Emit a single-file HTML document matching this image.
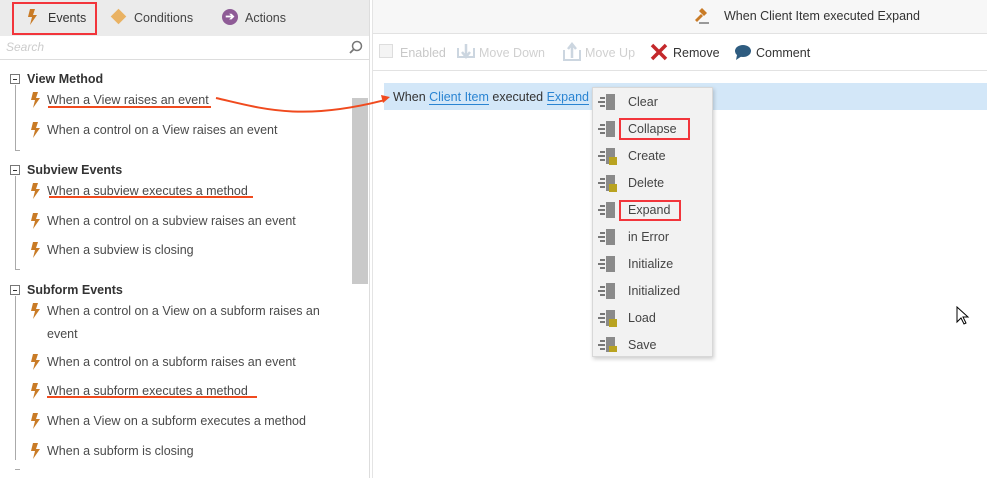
<!DOCTYPE html>
<html><head><style>
*{margin:0;padding:0;box-sizing:border-box}
body{width:987px;height:478px;overflow:hidden;background:#fff;font-family:"Liberation Sans",sans-serif;font-size:12.5px;color:#4a4a4a;position:relative}
.a{position:absolute;white-space:nowrap}
.bolt{position:absolute;width:10px;height:16px}
.it{position:absolute;left:47px;white-space:nowrap;margin-top:1px}
.hd{position:absolute;left:27px;font-weight:bold;color:#333;font-size:12.5px;margin-top:1px}
.mn{position:absolute;left:10px;width:10px;height:10px;border:1px solid #777;background:#fff}
.mn:after{content:"";position:absolute;left:2px;top:4px;width:4px;height:1px;background:#333}
.vl{position:absolute;left:15px;width:1px;background:#aaa}
.ul{position:absolute;height:2px;background:#f04a1e}
.mi{position:absolute;left:628px;white-space:nowrap;color:#444;margin-top:1px}
</style></head><body>
<div class="a" style="left:0;top:0;width:370px;height:36px;background:#ebebeb"></div>
<div class="a" style="left:12px;top:2px;width:85px;height:33px;border:2px solid #f2353b"></div>
<svg class="bolt" style="left:28px;top:9px" viewBox="0 0 10 16"><path d="M2 0h5L5 6h4L2 16l2-8H0z" fill="#c97b26"/></svg>
<div class="a" style="left:48px;top:11px;color:#333">Events</div>
<div class="a" style="left:113px;top:11px;width:11px;height:11px;background:#e9b263;transform:rotate(45deg)"></div>
<div class="a" style="left:134px;top:11px;color:#444">Conditions</div>
<div class="a" style="left:222px;top:9px;width:16px;height:16px;border-radius:50%;background:#8e5b96;color:#fff;font-size:11px;line-height:16px;text-align:center;font-weight:bold">➔</div>
<div class="a" style="left:245px;top:11px;color:#444">Actions</div>
<div class="a" style="left:0;top:36px;width:370px;height:24px;border-bottom:1px solid #ddd"></div>
<div class="a" style="left:6px;top:40px;color:#ccc;font-style:italic;font-size:12px">Search</div>
<svg class="a" style="left:349px;top:40px" width="14" height="14" viewBox="0 0 14 14"><circle cx="8" cy="6" r="4.5" fill="none" stroke="#777" stroke-width="1.5"/><path d="M5 9L1 13" stroke="#777" stroke-width="1.8"/></svg>
<div class="a" style="left:352px;top:98px;width:16px;height:186px;background:#c9c9c9"></div>
<div class="a" style="left:369px;top:0;width:1px;height:478px;background:#ddd"></div>
<div class="a" style="left:372px;top:0;width:1px;height:478px;background:#e4e4e4"></div>

<div class="mn" style="top:74px"></div><div class="hd" style="top:71px">View Method</div>
<div class="vl" style="top:85px;height:66px"></div><div class="a" style="left:15px;top:150px;width:5px;height:1px;background:#aaa"></div>
<svg class="bolt" style="left:31px;top:92px" viewBox="0 0 10 16"><path d="M2 0h5L5 6h4L2 16l2-8H0z" fill="#c97b26"/></svg>
<div class="it" style="top:92px">When a View raises an event</div><div class="ul" style="left:48px;top:106px;width:163px"></div>
<svg class="bolt" style="left:31px;top:122px" viewBox="0 0 10 16"><path d="M2 0h5L5 6h4L2 16l2-8H0z" fill="#c97b26"/></svg>
<div class="it" style="top:122px">When a control on a View raises an event</div>

<div class="mn" style="top:165px"></div><div class="hd" style="top:162px">Subview Events</div>
<div class="vl" style="top:176px;height:93px"></div><div class="a" style="left:15px;top:269px;width:5px;height:1px;background:#aaa"></div>
<svg class="bolt" style="left:31px;top:183px" viewBox="0 0 10 16"><path d="M2 0h5L5 6h4L2 16l2-8H0z" fill="#c97b26"/></svg>
<div class="it" style="top:183px">When a subview executes a method</div><div class="ul" style="left:49px;top:196px;width:204px"></div>
<svg class="bolt" style="left:31px;top:213px" viewBox="0 0 10 16"><path d="M2 0h5L5 6h4L2 16l2-8H0z" fill="#c97b26"/></svg>
<div class="it" style="top:213px">When a control on a subview raises an event</div>
<svg class="bolt" style="left:31px;top:242px" viewBox="0 0 10 16"><path d="M2 0h5L5 6h4L2 16l2-8H0z" fill="#c97b26"/></svg>
<div class="it" style="top:242px">When a subview is closing</div>

<div class="mn" style="top:285px"></div><div class="hd" style="top:282px">Subform Events</div>
<div class="vl" style="top:296px;height:164px"></div><div class="a" style="left:15px;top:469px;width:5px;height:1px;background:#aaa"></div>
<svg class="bolt" style="left:31px;top:303px" viewBox="0 0 10 16"><path d="M2 0h5L5 6h4L2 16l2-8H0z" fill="#c97b26"/></svg>
<div class="it" style="top:303px">When a control on a View on a subform raises an</div>
<div class="it" style="top:326px">event</div>
<svg class="bolt" style="left:31px;top:354px" viewBox="0 0 10 16"><path d="M2 0h5L5 6h4L2 16l2-8H0z" fill="#c97b26"/></svg>
<div class="it" style="top:354px">When a control on a subform raises an event</div>
<svg class="bolt" style="left:31px;top:383px" viewBox="0 0 10 16"><path d="M2 0h5L5 6h4L2 16l2-8H0z" fill="#c97b26"/></svg>
<div class="it" style="top:383px">When a subform executes a method</div><div class="ul" style="left:47px;top:396px;width:210px"></div>
<svg class="bolt" style="left:31px;top:413px" viewBox="0 0 10 16"><path d="M2 0h5L5 6h4L2 16l2-8H0z" fill="#c97b26"/></svg>
<div class="it" style="top:413px">When a View on a subform executes a method</div>
<svg class="bolt" style="left:31px;top:443px" viewBox="0 0 10 16"><path d="M2 0h5L5 6h4L2 16l2-8H0z" fill="#c97b26"/></svg>
<div class="it" style="top:443px">When a subform is closing</div>

<div class="a" style="left:373px;top:0;width:614px;height:34px;background:#f7f7f7;border-bottom:1px solid #e2e2e2"></div>
<svg class="a" style="left:693px;top:6px" width="18" height="20" viewBox="0 0 18 20"><path d="M9 2l5 5-3 3-5-5z" fill="#c97b26"/><path d="M8 8L2 14l2 2 6-6z" fill="#c97b26"/><rect x="6" y="16" width="10" height="2" fill="#999"/></svg>
<div class="a" style="left:724px;top:9px;color:#333">When Client Item executed Expand</div>
<div class="a" style="left:373px;top:35px;width:614px;height:36px;border-bottom:1px solid #e2e2e2"></div>
<div class="a" style="left:379px;top:44px;width:14px;height:14px;border:1px solid #ddd;background:#f4f4f4"></div>
<div class="a" style="left:400px;top:46px;color:#c8c8c8">Enabled</div>
<svg class="a" style="left:457px;top:42px" width="18" height="20" viewBox="0 0 18 20"><path d="M1 6v9h16V6" fill="none" stroke="#ccd6e0" stroke-width="2"/><path d="M9 2v12M5 10l4 5 4-5" fill="none" stroke="#ccd6e0" stroke-width="2.5"/></svg>
<div class="a" style="left:479px;top:46px;color:#d0d0d0">Move Down</div>
<svg class="a" style="left:563px;top:42px" width="18" height="20" viewBox="0 0 18 20"><path d="M1 8v10h16V8" fill="none" stroke="#ccd6e0" stroke-width="2"/><path d="M9 16V3M5 7l4-5 4 5" fill="none" stroke="#ccd6e0" stroke-width="2.5"/></svg>
<div class="a" style="left:585px;top:46px;color:#d0d0d0">Move Up</div>
<svg class="a" style="left:650px;top:43px" width="18" height="18" viewBox="0 0 18 18"><path d="M2 2L16 16M16 2L2 16" stroke="#c4282b" stroke-width="3.5"/></svg>
<div class="a" style="left:673px;top:46px;color:#333">Remove</div>
<svg class="a" style="left:734px;top:44px" width="18" height="16" viewBox="0 0 18 16"><ellipse cx="9" cy="7" rx="8" ry="6" fill="#2e5c80"/><path d="M3 11L2 16 8 12z" fill="#2e5c80"/></svg>
<div class="a" style="left:756px;top:46px;color:#333">Comment</div>
<div class="a" style="left:384px;top:83px;width:603px;height:27px;background:#d3e7f8"></div>
<div class="a" style="left:393px;top:90px;color:#333">When <span style="color:#2a84d2;border-bottom:1px solid #2a84d2">Client Item</span> executed <span style="color:#2a84d2;border-bottom:1px solid #2a84d2">Expand</span></div>
<svg class="a" style="left:0;top:0" width="400" height="130"><path d="M216 98C260 108 300 122 385 100" fill="none" stroke="#f04a1e" stroke-width="2"/><path d="M390 97l-9-2 2 8z" fill="#f04a1e"/></svg>
<div class="a" style="left:592px;top:87px;width:121px;height:270px;background:#f2f2f2;border:1px solid #d8d8d8;box-shadow:1px 2px 4px rgba(0,0,0,.2)"></div>
<div class="mi" style="top:94px">Clear</div>
<div class="mi" style="top:121px">Collapse</div>
<div class="a" style="left:619px;top:118px;width:71px;height:22px;border:2px solid #f2353b"></div>
<div class="mi" style="top:148px">Create</div>
<div class="mi" style="top:175px">Delete</div>
<div class="mi" style="top:202px">Expand</div>
<div class="a" style="left:619px;top:200px;width:62px;height:21px;border:2px solid #f2353b"></div>
<div class="mi" style="top:229px">in Error</div>
<div class="mi" style="top:256px">Initialize</div>
<div class="mi" style="top:283px">Initialized</div>
<div class="mi" style="top:310px">Load</div>
<div class="mi" style="top:337px">Save</div>
<svg class="a" style="left:598px;top:92px" width="20" height="260" viewBox="0 0 20 260">
<defs><g id="m"><rect x="8" y="0" width="9" height="16" fill="#8a8a8a"/><rect x="2" y="3" width="5" height="2" fill="#777"/><rect x="0" y="7" width="7" height="2" fill="#777"/><rect x="2" y="11" width="5" height="2" fill="#777"/></g>
<g id="d"><use href="#m"/><rect x="11" y="9" width="8" height="8" fill="#b9a320"/></g></defs>
<use href="#m" y="2"/><use href="#m" y="29"/><use href="#d" y="56"/><use href="#d" y="83"/><use href="#m" y="110"/><use href="#m" y="137"/><use href="#m" y="164"/><use href="#m" y="191"/><use href="#d" y="218"/><use href="#d" y="245"/>
</svg>
<svg class="a" style="left:956px;top:306px" width="14" height="20" viewBox="0 0 14 20"><path d="M1 1v15l4-4 3 6 2-1-3-6h5z" fill="#fff" stroke="#000"/></svg>
</body></html>
